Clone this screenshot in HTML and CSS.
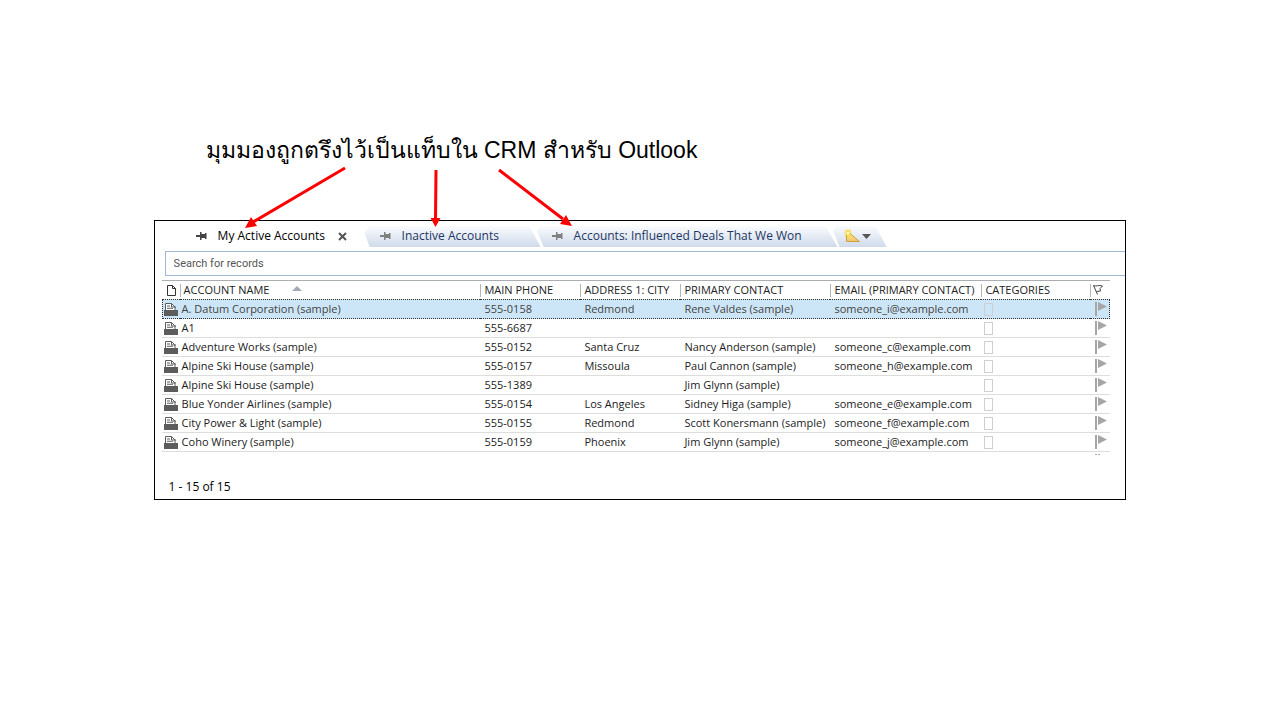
FILE: index.html
```html
<!DOCTYPE html>
<html lang="th">
<head>
<meta charset="utf-8">
<title>CRM สำหรับ Outlook</title>
<link rel="stylesheet" href="styles.css">
</head>
<body>
<svg class="defs" width="0" height="0" aria-hidden="true">
  <symbol id="pin" viewBox="0 0 11 8"><path d="M0 3h4v2H0zM4 0h1.500v2H9V1h1.500v6H9V6H5.500v2H4z"/></symbol>
  <symbol id="record" viewBox="0 0 14 13"><path d="M1.500 7.500v-7h6l3.500 3.500v3.500" fill="#fff" stroke="currentColor"/><path d="M7.500.5V4H12" fill="none" stroke="currentColor"/><path d="M3 2.500h3v1H3zM3 4.800h6v1H3z"/><path d="M0 7h14v6H0z"/></symbol>
  <symbol id="flag" viewBox="0 0 12 14"><path d="M0 0h2v14H0zM3 0l9 4.500L3 9z"/></symbol>
</svg>
<main class="slide">
  <h1 class="caption">มุมมองถูกตรึงไว้เป็นแท็บใน CRM สำหรับ Outlook</h1>
  <section class="panel">
    <nav class="tabs">
      <button class="tab active"><svg class="pin"><use href="#pin"/></svg><span>My Active Accounts</span><svg class="close" viewBox="0 0 9 9"><path d="M1 1l7 7M8 1L1 8"/></svg></button>
      <button class="tab inactive"><svg class="pin"><use href="#pin"/></svg><span>Inactive Accounts</span></button>
      <button class="tab influenced"><svg class="pin"><use href="#pin"/></svg><span>Accounts: Influenced Deals That We Won</span></button>
      <button class="tab new" aria-label="New view"><svg class="newview" viewBox="0 0 18 14"><defs><linearGradient id="gold" x2="0" y2="1"><stop stop-color="#ffe98d"/><stop offset="1" stop-color="#f3c565"/></linearGradient></defs><path d="M2.500 6v6.500h13L6 4.500z" fill="url(#gold)" stroke="#cf9f48"/><path d="M4 0v8M0 4h8M1 1l6 6M7 1L1 7" stroke="#f7d93f" stroke-width="1.2"/><circle cx="4" cy="4" r="1.500" fill="#fff8cf"/></svg><svg class="drop" viewBox="0 0 9 5"><path d="M0 0h9L4.500 5z"/></svg></button>
    </nav>
    <input class="search" type="text" placeholder="Search for records" aria-label="Search for records">
    <div class="list">
      <table class="grid">
        <colgroup><col class="c-icon"><col class="c-name"><col class="c-phone"><col class="c-city"><col class="c-contact"><col class="c-email"><col class="c-cat"><col class="c-flag"></colgroup>
        <thead><tr>
          <th><svg class="page" viewBox="0 0 9 11"><path d="M.5.5h5l3 3v7h-8zM5.500.5v3h3"/></svg></th>
          <th>ACCOUNT NAME<svg class="sort" viewBox="0 0 10 5"><path d="M0 5h10L5 0z"/></svg></th>
          <th>MAIN PHONE</th><th>ADDRESS 1: CITY</th><th>PRIMARY CONTACT</th><th>EMAIL (PRIMARY CONTACT)</th><th>CATEGORIES</th>
          <th><svg class="flaghead" viewBox="0 0 11 10"><path d="M.5.5l4 9M.5.5c3 1.500 5-1 9 .5L7 3.500l.5 2.500-4 .5"/></svg></th>
        </tr></thead>
        <tbody>
          <tr class="selected"><td><svg class="record"><use href="#record"/></svg></td><td>A. Datum Corporation (sample)</td><td>555-0158</td><td>Redmond</td><td>Rene Valdes (sample)</td><td>someone_i@example.com</td><td><span class="box"></span></td><td><svg class="flag"><use href="#flag"/></svg></td></tr>
          <tr><td><svg class="record"><use href="#record"/></svg></td><td>A1</td><td>555-6687</td><td></td><td></td><td></td><td><span class="box"></span></td><td><svg class="flag"><use href="#flag"/></svg></td></tr>
          <tr><td><svg class="record"><use href="#record"/></svg></td><td>Adventure Works (sample)</td><td>555-0152</td><td>Santa Cruz</td><td>Nancy Anderson (sample)</td><td>someone_c@example.com</td><td><span class="box"></span></td><td><svg class="flag"><use href="#flag"/></svg></td></tr>
          <tr><td><svg class="record"><use href="#record"/></svg></td><td>Alpine Ski House (sample)</td><td>555-0157</td><td>Missoula</td><td>Paul Cannon (sample)</td><td>someone_h@example.com</td><td><span class="box"></span></td><td><svg class="flag"><use href="#flag"/></svg></td></tr>
          <tr><td><svg class="record"><use href="#record"/></svg></td><td>Alpine Ski House (sample)</td><td>555-1389</td><td></td><td>Jim Glynn (sample)</td><td></td><td><span class="box"></span></td><td><svg class="flag"><use href="#flag"/></svg></td></tr>
          <tr><td><svg class="record"><use href="#record"/></svg></td><td>Blue Yonder Airlines (sample)</td><td>555-0154</td><td>Los Angeles</td><td>Sidney Higa (sample)</td><td>someone_e@example.com</td><td><span class="box"></span></td><td><svg class="flag"><use href="#flag"/></svg></td></tr>
          <tr><td><svg class="record"><use href="#record"/></svg></td><td>City Power &amp; Light (sample)</td><td>555-0155</td><td>Redmond</td><td>Scott Konersmann (sample)</td><td>someone_f@example.com</td><td><span class="box"></span></td><td><svg class="flag"><use href="#flag"/></svg></td></tr>
          <tr><td><svg class="record"><use href="#record"/></svg></td><td>Coho Winery (sample)</td><td>555-0159</td><td>Phoenix</td><td>Jim Glynn (sample)</td><td>someone_j@example.com</td><td><span class="box"></span></td><td><svg class="flag"><use href="#flag"/></svg></td></tr>
        </tbody>
      </table>
      <div class="cut"><svg class="cutflag" viewBox="0 0 5 1"><path d="M0 0h2v1H0zM3 0h2v1H3z"/></svg></div>
    </div>
    <p class="status">1 - 15 of 15</p>
  </section>
  <svg class="arrows" viewBox="0 0 340 70" aria-hidden="true">
    <g class="shaft"><path d="M105 8L13 62M196 10l-.5 50M259 10l64 49"/></g>
    <path d="M5 68l6-11 6 9zM190.500 58h10l-5 9zM332 66l-12-2 6-9z"/>
  </svg>
</main>
</body>
</html>
```
FILE: styles.css
```css
* { box-sizing: border-box; }
body { margin: 0; background: #fff; color: #1c1c1c; font-family: "Open Sans", "Noto Sans", sans-serif; font-size: 11px; }
svg { display: block; fill: currentColor; overflow: visible; }
.defs { position: absolute; }
.slide { position: relative; padding: 132px 12% 0; }
.caption { margin: 0 0 54px; padding: 2px 0 0 52px; color: #000; font: 400 23px/32px "Liberation Sans", sans-serif; }
.panel { border: 1px solid #000; padding: 5px 0 4px; }
.tabs { display: flex; height: 21px; padding-left: 36px; }
.tab { display: flex; align-items: center; height: 21px; padding: 0 0 1px; border: 0; background: linear-gradient(#fafcfe, #cfdaea); color: #1f3763; font: 12px/18px "Open Sans", "Noto Sans", sans-serif; white-space: nowrap; }
.tab span { padding-bottom: 1px; }
.tab.active { width: 174px; padding-left: 5px; background: none; color: #000; }
.tab.inactive { width: 176px; padding-left: 15px; clip-path: polygon(5px 0, 165px 0, 100% 100%, 5px 100%, 0 7px); }
.tab.influenced { width: 301px; margin-left: -4px; padding-left: 15px; clip-path: polygon(5px 0, 289px 0, 100% 100%, 7px 100%, 0 4px); }
.tab.new { width: 54px; margin-left: -5px; padding-left: 11px; clip-path: polygon(5px 0, 43px 0, 100% 100%, 7px 100%, 0 4px); }
.pin { width: 11px; height: 8px; margin-right: 11px; color: #808080; }
.active .pin { color: #444; }
.close { width: 9px; height: 9px; margin-left: auto; margin-right: 18px; fill: none; stroke: #555; stroke-width: 2; }
.newview { width: 18px; height: 14px; fill: none; }
.drop { width: 9px; height: 5px; color: #555; }
.search { display: block; width: calc(100% - 10px); height: 25px; margin: 4px 0 4px 10px; padding: 0 8px; border: 1px solid #a0b8d3; border-right: 0; background: #fff; color: #555; font: 11px/23px Roboto, sans-serif; }
.search::placeholder { color: #555; opacity: 1; }
.list { margin: 0 15px 0 7px; }
.grid { width: 100%; border-collapse: separate; border-spacing: 0; table-layout: fixed; }
.c-icon { width: 18px; }
.c-phone, .c-city { width: 100px; }
.c-contact { width: 150px; }
.c-email { width: 151px; }
.c-cat { width: 109px; }
.c-flag { width: 20px; }
.grid th { height: 19px; padding: 0 0 0 4px; border-top: 1px solid #aaaeb2; color: #222; font-weight: 400; line-height: 18px; text-align: left; white-space: nowrap; background: linear-gradient(#b0b6bd, #b0b6bd) 0 3px / 1px 13px no-repeat; }
.grid th:first-child { background: none; }
.grid td { height: 19px; padding: 0 0 0 4px; border-bottom: 1px solid #ddd; line-height: 18px; white-space: nowrap; }
.grid td:first-child, .grid td:nth-child(2) { padding-left: 2px; }
.grid .selected td { height: 20px; border-top: 1px dotted #333; border-bottom: 1px dotted #333; background: #cde6f7; color: #444; }
.grid .selected td:first-child { border-left: 1px dotted #333; padding-left: 1px; }
.grid .selected td:last-child { border-right: 1px dotted #333; }
.page { width: 9px; height: 11px; margin-left: 1px; fill: none; stroke: #333; }
.sort { display: inline-block; width: 10px; height: 5px; margin-left: 23px; vertical-align: 3px; color: #a5a9b3; }
.flaghead { width: 11px; height: 10px; margin-left: -1px; fill: none; stroke: #444; }
.record { width: 14px; height: 13px; color: #5c5c5c; }
.box { display: block; width: 9px; height: 13px; margin-left: -1px; border: 1px solid #ccd0d4; }
.flag { width: 12px; height: 14px; margin-left: 1px; color: #a6a6a6; }
.cut { display: flex; justify-content: flex-end; padding: 2px 10px 0 0; }
.cutflag { width: 5px; height: 1px; color: #aaa; }
.status { margin: 24px 0 0 14px; color: #000; font-size: 12px; line-height: 16px; }
.arrows { position: absolute; left: 240px; top: 160px; width: 340px; height: 70px; color: #f00; pointer-events: none; }
.shaft { fill: none; stroke: #f00; stroke-width: 3; stroke-linecap: butt; }
```
